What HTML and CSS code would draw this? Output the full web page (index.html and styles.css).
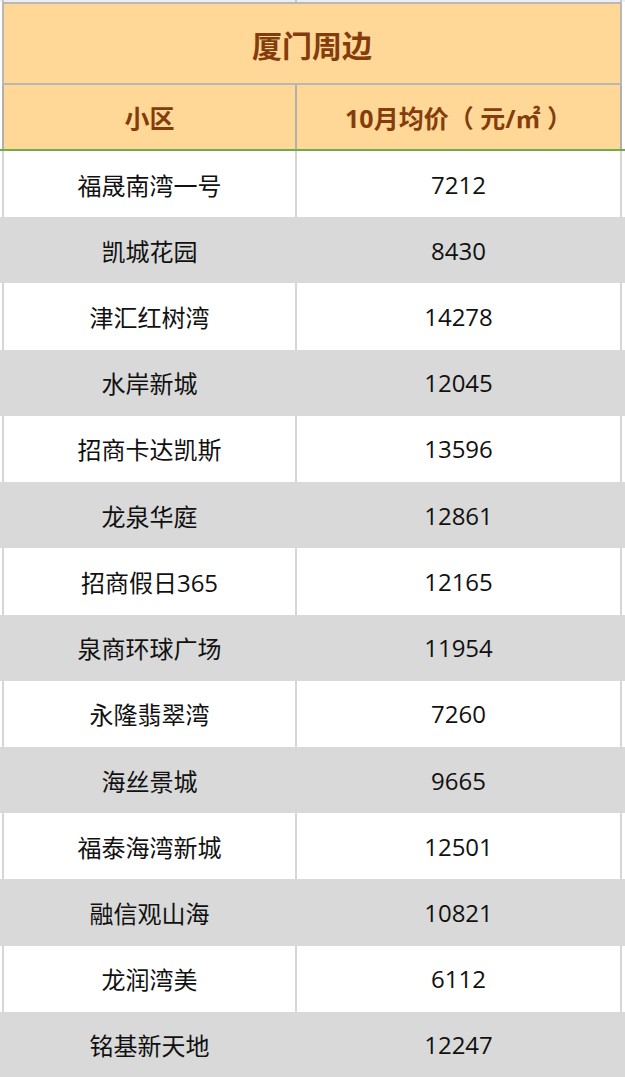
FILE: index.html
```html
<!DOCTYPE html>
<html lang="zh-CN">
<head>
<meta charset="utf-8">
<title>厦门周边</title>
<link rel="stylesheet" href="styles.css">
</head>
<body>
<div class="sheet">
  <div class="row top"><div class="cell c1"></div><div class="cell c2"></div></div>
  <div class="title">厦门周边</div>
  <div class="row head"><div class="cell c1">小区</div><div class="cell c2">10月均价（ 元/㎡ ）</div></div>
  <div class="row"><div class="cell c1">福晟南湾一号</div><div class="cell c2">7212</div></div>
  <div class="row alt"><div class="cell c1">凯城花园</div><div class="cell c2">8430</div></div>
  <div class="row"><div class="cell c1">津汇红树湾</div><div class="cell c2">14278</div></div>
  <div class="row alt"><div class="cell c1">水岸新城</div><div class="cell c2">12045</div></div>
  <div class="row"><div class="cell c1">招商卡达凯斯</div><div class="cell c2">13596</div></div>
  <div class="row alt"><div class="cell c1">龙泉华庭</div><div class="cell c2">12861</div></div>
  <div class="row"><div class="cell c1">招商假日365</div><div class="cell c2">12165</div></div>
  <div class="row alt"><div class="cell c1">泉商环球广场</div><div class="cell c2">11954</div></div>
  <div class="row"><div class="cell c1">永隆翡翠湾</div><div class="cell c2">7260</div></div>
  <div class="row alt"><div class="cell c1">海丝景城</div><div class="cell c2">9665</div></div>
  <div class="row"><div class="cell c1">福泰海湾新城</div><div class="cell c2">12501</div></div>
  <div class="row alt"><div class="cell c1">融信观山海</div><div class="cell c2">10821</div></div>
  <div class="row"><div class="cell c1">龙润湾美</div><div class="cell c2">6112</div></div>
  <div class="row alt"><div class="cell c1">铭基新天地</div><div class="cell c2">12247</div></div>
</div>
</body>
</html>
```
FILE: styles.css
```css
html, body {
  margin: 0;
  padding: 0;
  background: #ffffff;
}

body {
  font-family: "Open Sans", "Noto Sans CJK SC", sans-serif;
  color: #111111;
}

.sheet {
  width: 625px;
  overflow: hidden;
}

.row {
  display: flex;
  height: 66.23px;
  box-sizing: border-box;
  background: #ffffff;
}

.cell {
  box-sizing: border-box;
  display: flex;
  align-items: center;
  justify-content: center;
  font-size: 24px;
  white-space: pre;
}

.c1 {
  margin-left: 2px;
  width: 293px;
  border-left: 2px solid #d6d6d6;
}

.c2 {
  width: 327px;
  border-left: 2px solid #d6d6d6;
  border-right: 2px solid #d6d6d6;
}

.alt {
  background: #d9d9d9;
}

.alt .cell {
  border-color: transparent;
}

.top {
  height: 2px;
  background: #eeeeee;
}

.top .cell {
  border-color: #c6c6c6;
}

.title {
  box-sizing: border-box;
  margin-left: 2px;
  width: 620px;
  height: 83px;
  border: 2px solid #b8b8b8;
  background: #ffd898;
  color: #843c0c;
  font-size: 30px;
  font-weight: bold;
  display: flex;
  align-items: center;
  justify-content: center;
}

.head {
  height: 66px;
  border-bottom: 2px solid #70ad47;
}

.head .cell {
  background: #ffd898;
  color: #843c0c;
  font-weight: bold;
  font-size: 25px;
  border-color: #b0b0b0;
}
```
